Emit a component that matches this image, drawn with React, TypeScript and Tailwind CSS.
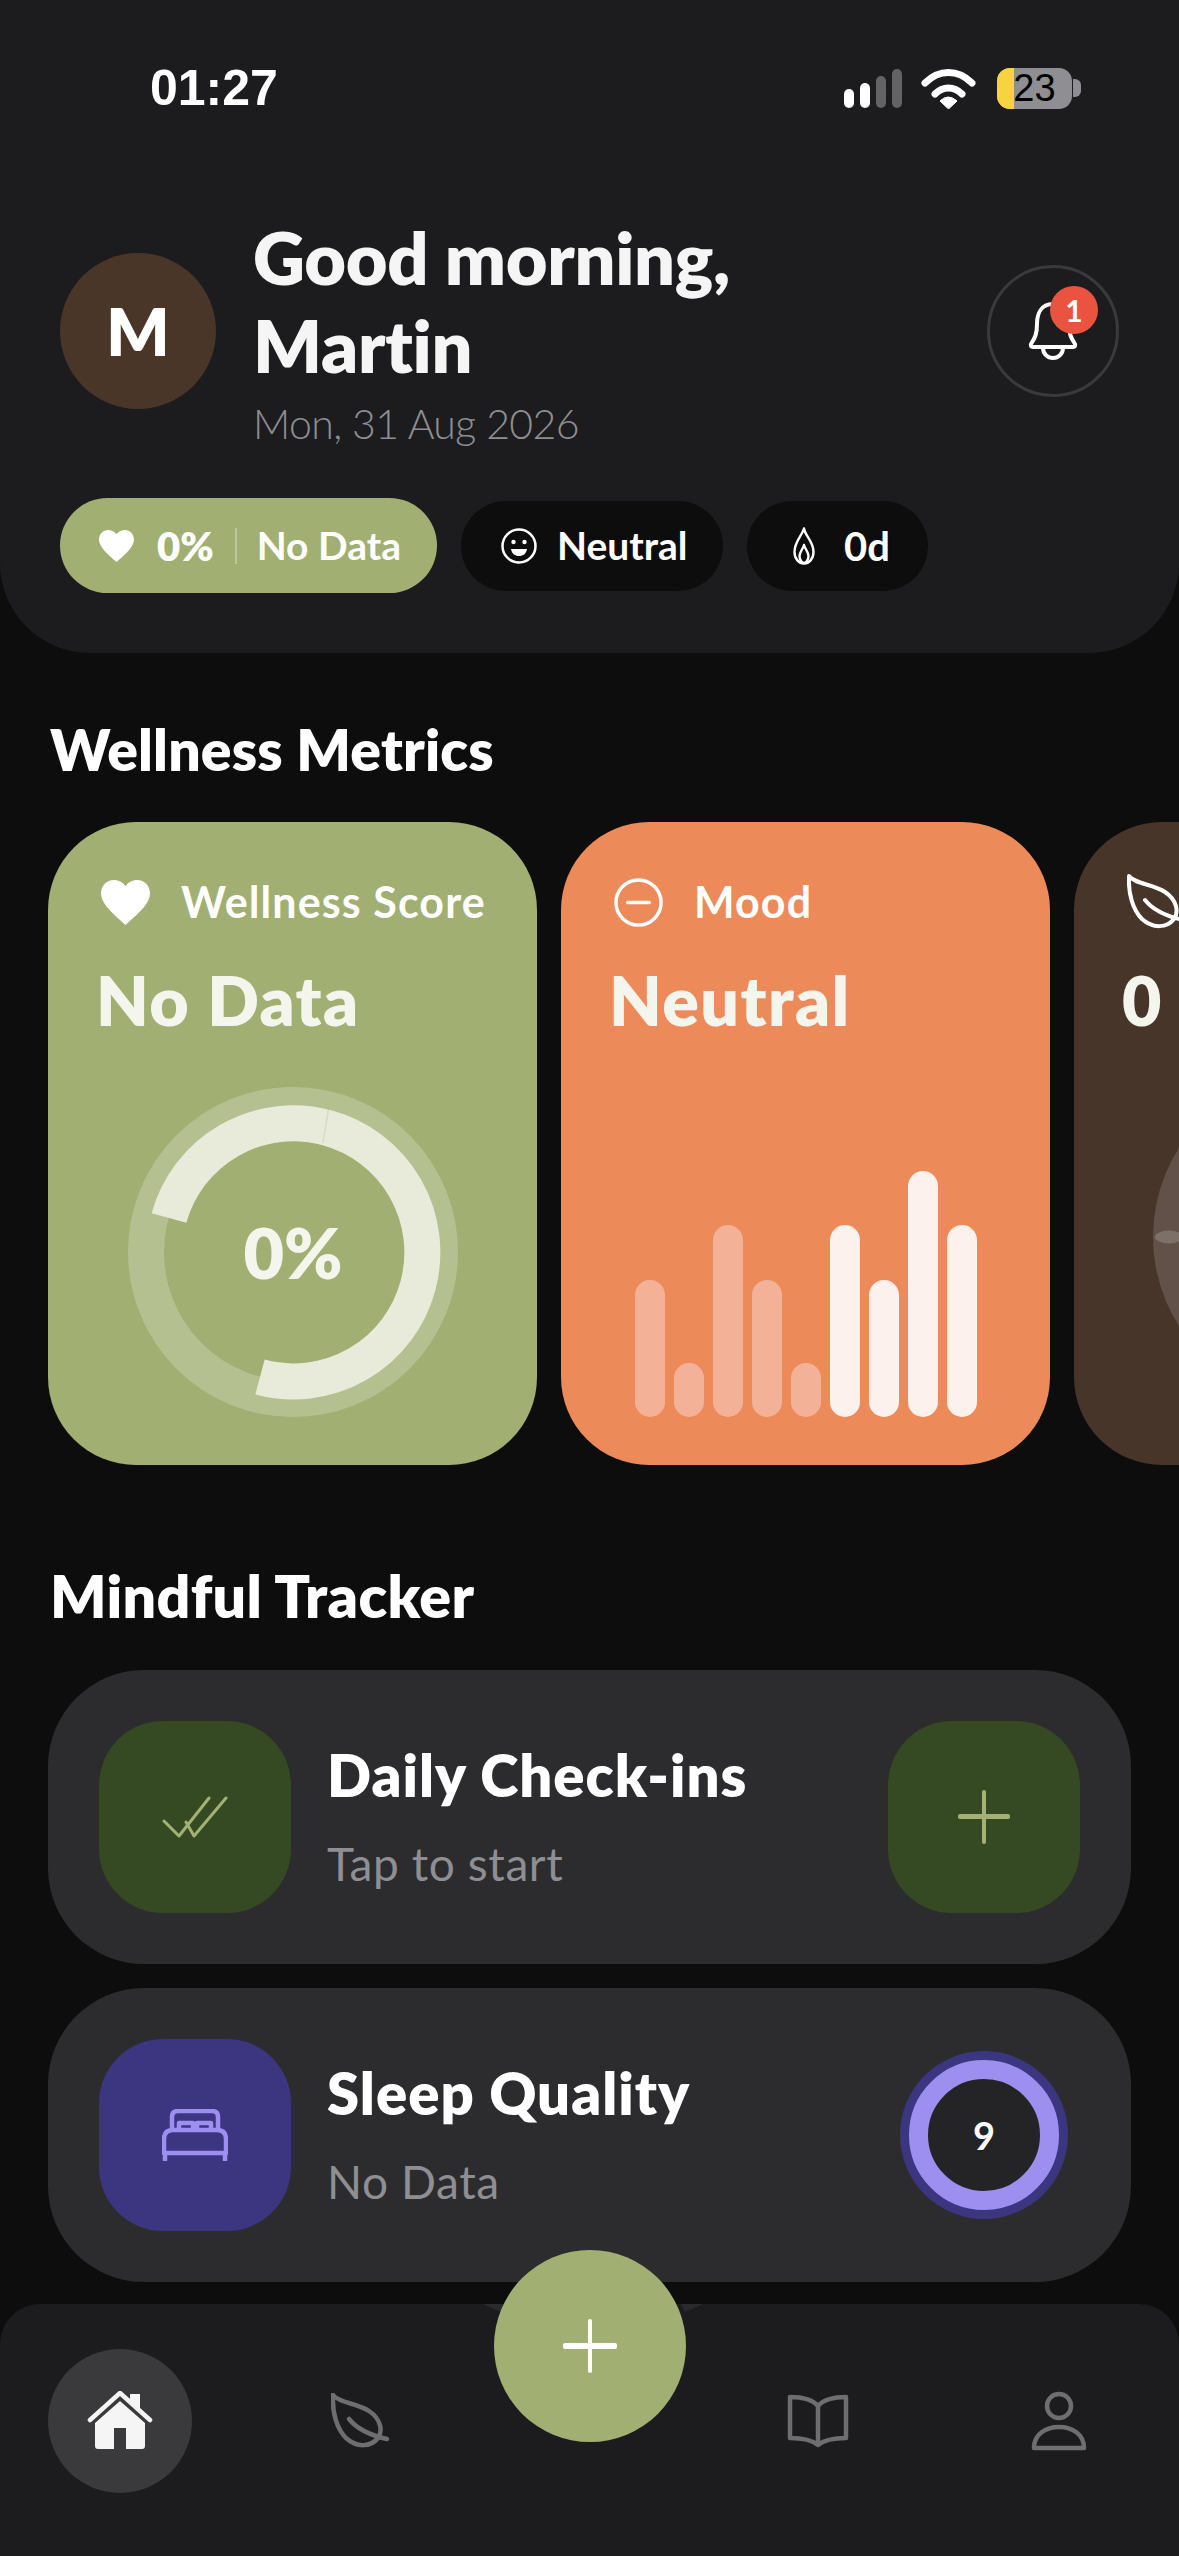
import React from "react";

const LeafPath = () => (
  <>
    <path d="M2 2C8 10 26 10 38 18C50 26 52 38 47 45C40 54 26 55 15 45C6 36 1 20 2 2Z" />
    <path d="M18 26C26 36 38 42 56 46" />
  </>
);

function Leaf({ stroke, width }: { stroke: string; width: number }) {
  return (
    <svg width="60" height="56" viewBox="0 0 60 56" fill="none" stroke={stroke} strokeWidth={width} strokeLinecap="round" strokeLinejoin="round" className="shrink-0">
      <LeafPath />
    </svg>
  );
}

function StatusBar() {
  return (
    <div className="flex items-center justify-between h-[50px] pl-[150px] pr-[98px]">
      <span className="font-['Liberation_Sans',sans-serif] font-bold text-[50px] leading-[50px] text-white">01:27</span>
      <div className="flex items-center">
        <svg width="58" height="39" viewBox="0 0 58 39" className="shrink-0">
          <rect x="0" y="20" width="10" height="19" rx="5" fill="#fff" />
          <rect x="16" y="14" width="10" height="25" rx="5" fill="#fff" />
          <rect x="32" y="7" width="10" height="32" rx="5" fill="#636366" />
          <rect x="48" y="0" width="10" height="39" rx="5" fill="#636366" />
        </svg>
        <svg width="55" height="41" viewBox="0 0 55 41" className="ml-[19px] shrink-0">
          <path d="M4 15C18 1 37 1 51 15" fill="none" stroke="#fff" strokeWidth="7" strokeLinecap="round" />
          <path d="M14 26C22 18 33 18 41 26" fill="none" stroke="#fff" strokeWidth="7" strokeLinecap="round" />
          <path d="M19 33Q27 25 36 33L27.500 41Z" fill="#fff" stroke="#fff" strokeWidth="1" strokeLinejoin="round" />
        </svg>
        <div className="relative ml-[21px] w-[75px] h-[41px] rounded-[13px] bg-[#8e8e93] overflow-hidden">
          <div className="absolute inset-y-0 left-0 w-[17px] bg-[#f7d33f]" />
          <span className="absolute inset-0 flex items-center justify-center font-['Liberation_Sans',sans-serif] text-[38px] leading-none text-black">23</span>
        </div>
        <div className="w-[8px] h-[18px] ml-[1px] rounded-r-[6px] bg-[#8e8e93]" />
      </div>
    </div>
  );
}

function Header() {
  return (
    <header className="h-[653px] bg-[#1c1c1e] rounded-b-[90px] pt-[63px] shrink-0">
      <StatusBar />
      <div className="flex items-center pl-[60px] pr-[60px] mt-[100px]">
        <div className="w-[156px] h-[156px] rounded-full bg-[#4a3628] flex items-center justify-center shrink-0 text-white font-extrabold text-[66px] leading-none">M</div>
        <div className="ml-[37px] flex-1">
          <h1 className="text-[72px] leading-[88px] font-extrabold tracking-[-0.3px] text-[#f5f5f5]">
            Good morning,
            <br />
            Martin
          </h1>
          <p className="mt-[10px] text-[41px] leading-[50px] font-light tracking-[-0.6px] text-[#8e8e93]">Mon, 31 Aug 2026</p>
        </div>
        <div className="relative w-[132px] h-[132px] rounded-full border-[3px] border-[#3a3a3c] flex items-center justify-center shrink-0">
          <svg width="52" height="62" viewBox="0 0 52 62" fill="none" stroke="#fff" strokeWidth="4" strokeLinejoin="round">
            <path d="M26 4C14 4 10 14 10 24C10 34 8 38 4 44Q3 47 6 47H46Q49 47 48 44C44 38 42 34 42 24C42 14 38 4 26 4Z" />
            <path d="M16 48A10 10 0 0 0 36 48" />
          </svg>
          <span className="absolute left-[60px] top-[18px] w-[48px] h-[48px] rounded-full bg-[#e9533f] flex items-center justify-center text-white font-bold text-[30px] leading-none">1</span>
        </div>
      </div>
      <div className="flex items-center pl-[60px] mt-[49px]">
        <div className="h-[95px] w-[377px] rounded-full bg-[#a1af72] flex items-center pl-[39px] text-white font-bold text-[40px] leading-none">
          <svg width="35" height="32" viewBox="0 0 24 22" fill="#fff" className="shrink-0">
            <path d="M12 22C4 15 0 11 0 6.500C0 2.800 2.800 0 6.300 0C8.500 0 10.700 1.100 12 3C13.300 1.100 15.500 0 17.700 0C21.200 0 24 2.800 24 6.500C24 11 20 15 12 22Z" />
          </svg>
          <span className="ml-[23px] font-extrabold">0%</span>
          <span className="w-[2px] h-[36px] bg-white/30 ml-[21px]" />
          <span className="ml-[20px] font-bold text-[39px]">No Data</span>
        </div>
        <div className="ml-[24px] h-[90px] w-[262px] rounded-full bg-[#0d0d0d] flex items-center pl-[40px] text-white font-bold text-[39px] leading-none">
          <svg width="36" height="36" viewBox="0 0 36 36" fill="none" className="shrink-0">
            <circle cx="18" cy="18" r="16.500" stroke="#fff" strokeWidth="2.500" />
            <circle cx="12.500" cy="14" r="2.200" fill="#fff" />
            <circle cx="23.500" cy="14" r="2.200" fill="#fff" />
            <path d="M10 21H26C25 26 22 28 18 28C14 28 11 26 10 21Z" fill="#fff" />
          </svg>
          <span className="ml-[20px]">Neutral</span>
        </div>
        <div className="ml-[24px] h-[90px] w-[181px] rounded-full bg-[#0d0d0d] flex items-center pl-[46px] text-white font-bold text-[40px] leading-none">
          <svg width="22" height="38" viewBox="0 0 22 38" fill="none" stroke="#fff" strokeWidth="2.400" strokeLinejoin="round" className="shrink-0">
            <path d="M11 1.500C12 9 20.500 14 20.500 25C20.500 32 16 36.500 11 36.500C6 36.500 1.500 32 1.500 25C1.500 14 9 9 11 1.500Z" />
            <path d="M11 18C12 22 15.500 25 15.500 29C15.500 33 13 36 11 36C9 36 6.500 33 6.500 29C6.500 25 10 22 11 18Z" />
          </svg>
          <span className="ml-[29px]">0d</span>
        </div>
      </div>
    </header>
  );
}

function CardHead({ icon, label, value }: { icon: React.ReactNode; label?: string; value: string }) {
  return (
    <>
      <div className="flex items-center h-[56px] pl-[3px] whitespace-nowrap">
        {icon}
        {label && <span className="ml-[31px] text-[43px] leading-[56px] font-bold tracking-[1.100px] text-white">{label}</span>}
      </div>
      <div className="mt-[32px] -ml-[2px] text-[68px] leading-[76px] font-extrabold tracking-[1.400px] text-[#f4f5ec] whitespace-nowrap">{value}</div>
    </>
  );
}

const cardShell = "w-[489px] h-[643px] shrink-0 rounded-[88px] pt-[52px] pb-[48px] px-[50px] flex flex-col";

function WellnessCard() {
  return (
    <div className={`${cardShell} bg-[#a1af72]`}>
      <CardHead
        label="Wellness Score"
        value="No Data"
        icon={
          <svg width="49" height="45" viewBox="0 0 24 22" fill="#fff" className="shrink-0">
            <path d="M12 22C4 15 0 11 0 6.500C0 2.800 2.800 0 6.300 0C8.500 0 10.700 1.100 12 3C13.300 1.100 15.500 0 17.700 0C21.200 0 24 2.800 24 6.500C24 11 20 15 12 22Z" />
          </svg>
        }
      />
      <div className="relative w-[330px] h-[330px] mt-auto ml-[30px]">
        <svg width="330" height="330" viewBox="-165 -165 330 330" fill="none">
          <circle r="147" stroke="#fff" strokeOpacity="0.22" strokeWidth="36" />
          <path d="M-33 125A129 129 0 1 0 -124 -34" stroke="#e8ebda" strokeWidth="36" />
          <path d="M36 -146L30 -109" stroke="#a1af72" strokeOpacity="0.25" strokeWidth="1.500" />
        </svg>
        <span className="absolute inset-0 flex items-center justify-center text-[70px] leading-none font-extrabold text-[#f4f5ec]">0%</span>
      </div>
    </div>
  );
}

const bars = [
  { h: "h-[137px]", on: false },
  { h: "h-[54px]", on: false },
  { h: "h-[192px]", on: false },
  { h: "h-[137px]", on: false },
  { h: "h-[54px]", on: false },
  { h: "h-[192px]", on: true },
  { h: "h-[137px]", on: true },
  { h: "h-[246px]", on: true },
  { h: "h-[192px]", on: true },
];

function MoodCard() {
  return (
    <div className={`${cardShell} bg-[#ed8a5a]`}>
      <CardHead
        label="Mood"
        value="Neutral"
        icon={
          <svg width="49" height="49" viewBox="0 0 50 50" fill="none" stroke="#fff" strokeWidth="3.500" strokeLinecap="round" className="shrink-0">
            <circle cx="25" cy="25" r="23" />
            <path d="M14 25H36" />
          </svg>
        }
      />
      <div className="flex items-end justify-center gap-[9px] mt-auto">
        {bars.map((b, i) => (
          <div key={i} className={`w-[30px] rounded-full ${b.h} ${b.on ? "bg-[#fcf1ec]" : "bg-[#f3b297]"}`} />
        ))}
      </div>
    </div>
  );
}

function MindfulCard() {
  return (
    <div className={`${cardShell} bg-[#47352a]`}>
      <CardHead value="0" icon={<Leaf stroke="#fff" width={4} />} />
      <svg width="330" height="330" viewBox="0 0 330 330" className="mt-auto ml-[29px] shrink-0 overflow-visible">
        <circle cx="165" cy="150" r="165" fill="#fff" fillOpacity="0.14" />
        <ellipse cx="16" cy="150" rx="14" ry="6.500" fill="#fff" fillOpacity="0.18" />
      </svg>
    </div>
  );
}

function TrackerRow({ tile, title, sub, right, icon }: { tile: string; title: string; sub: string; right: React.ReactNode; icon: React.ReactNode }) {
  return (
    <div className="h-[294px] rounded-[96px] bg-[#2c2c2e] flex items-center pl-[51px] pr-[51px]">
      <div className={`w-[192px] h-[192px] rounded-[64px] ${tile} flex items-center justify-center shrink-0`}>{icon}</div>
      <div className="ml-[36px] flex-1 pb-[3px]">
        <div className="text-[58px] leading-[68px] font-extrabold tracking-[1px] text-white">{title}</div>
        <div className="mt-[28px] text-[46px] leading-[54px] font-normal tracking-[0.6px] text-[#8e8e93]">{sub}</div>
      </div>
      {right}
    </div>
  );
}

function BottomNav() {
  return (
    <nav className="absolute left-0 right-0 bottom-0 h-[252px] bg-[#1c1c1e] rounded-t-[40px]">
      <svg width="220" height="10" viewBox="0 0 220 10" className="absolute left-[483px] top-0">
        <path d="M0 0H22L18 8Z" fill="#2a2a2c" />
        <path d="M198 0H220L202 8Z" fill="#2a2a2c" />
      </svg>
      <div className="flex items-start pl-[48px] pt-[45px]">
        <div className="w-[144px] h-[144px] rounded-full bg-[#3a3a3c] flex items-center justify-center">
          <svg width="66" height="60" viewBox="0 0 66 60" fill="#f5f5f5">
            <path d="M3 29L33 2L63 29" fill="none" stroke="#f5f5f5" strokeWidth="4.500" strokeLinecap="round" strokeLinejoin="round" />
            <path d="M43 3H53V18L43 9Z" />
            <path d="M33 10L58 32V55Q58 58 55 58H39V37H27V58H11Q8 58 8 55V32Z" />
          </svg>
        </div>
        <div className="w-[144px] h-[144px] ml-[97px] flex items-center justify-center">
          <Leaf stroke="#6e6e70" width={4.500} />
        </div>
        <div className="w-[144px] h-[144px] ml-[313px] flex items-center justify-center">
          <svg width="62" height="54" viewBox="0 0 62 54" fill="none" stroke="#6e6e70" strokeWidth="4.500" strokeLinejoin="round">
            <path d="M31 12C25 5 14 3 3 3V44C14 44 25 46 31 51C37 46 48 44 59 44V3C48 3 37 5 31 12Z" />
            <path d="M31 12V51" />
          </svg>
        </div>
        <div className="w-[144px] h-[144px] ml-[97px] flex items-center justify-center">
          <svg width="56" height="62" viewBox="0 0 56 62" fill="none" stroke="#6e6e70" strokeWidth="4.500" strokeLinejoin="round">
            <circle cx="28" cy="16" r="12" />
            <path d="M3 58C3 44 15 37 28 37C41 37 53 44 53 58Z" />
          </svg>
        </div>
      </div>
      <div className="absolute left-[494px] -top-[54px] w-[192px] h-[192px] rounded-full bg-[#a1af72] flex items-center justify-center">
        <svg width="54" height="54" viewBox="0 0 54 54" fill="#fff">
          <rect x="25" y="0" width="4" height="54" rx="2" />
          <rect x="0" y="24" width="54" height="6" rx="2" />
        </svg>
      </div>
    </nav>
  );
}

export default function App() {
  return (
    <div className="relative w-[1179px] h-[2556px] overflow-hidden bg-[#0d0d0d] font-['Lato',sans-serif] flex flex-col">
      <Header />
      <main className="flex-1 flex flex-col">
        <h2 className="mt-[60px] ml-[50px] text-[57px] leading-[72px] font-extrabold tracking-[0.2px] text-white">Wellness Metrics</h2>
        <div className="mt-[37px] flex gap-[24px] pl-[48px] overflow-hidden">
          <WellnessCard />
          <MoodCard />
          <MindfulCard />
        </div>
        <h2 className="mt-[95px] ml-[50px] text-[59px] leading-[72px] font-extrabold tracking-[0.3px] text-white">Mindful Tracker</h2>
        <div className="mt-[38px] mx-[48px] flex flex-col gap-[24px]">
          <TrackerRow
            tile="bg-[#354a22]"
            title="Daily Check-ins"
            sub="Tap to start"
            icon={
              <svg width="66" height="42" viewBox="0 0 66 42" fill="none" stroke="#a3b174" strokeWidth="3" strokeLinecap="round" strokeLinejoin="round">
                <path d="M2 25L17 40L47 2" />
                <path d="M24 26L32 40L64 2" />
              </svg>
            }
            right={
              <div className="w-[192px] h-[192px] rounded-[64px] bg-[#354a22] flex items-center justify-center shrink-0">
                <svg width="52" height="54" viewBox="0 0 52 54" fill="#a3b174">
                  <rect x="24" y="0" width="4" height="54" rx="2" />
                  <rect x="0" y="24" width="52" height="5" rx="2" />
                </svg>
              </div>
            }
          />
          <TrackerRow
            tile="bg-[#3c3580]"
            title="Sleep Quality"
            sub="No Data"
            icon={
              <svg width="66" height="52" viewBox="0 0 66 52" fill="none" stroke="#9d8ff0" strokeWidth="4.500" strokeLinejoin="round">
                <path d="M10 21V8Q10 2 16 2H50Q56 2 56 8V21" />
                <path d="M17 21V14H31V21M35 21V14H49V21" />
                <path d="M2 44V30Q2 21 11 21H55Q64 21 64 30V44Z" />
                <path d="M3 44V51M63 44V51" strokeLinecap="round" />
              </svg>
            }
            right={
              <div className="w-[168px] h-[168px] mr-[12px] rounded-full bg-[#3c3580] flex items-center justify-center shrink-0">
                <div className="w-[150px] h-[150px] rounded-full border-[19px] border-[#9d8ff0] bg-[#242426] flex items-center justify-center text-white font-bold text-[38px] leading-none">9</div>
              </div>
            }
          />
        </div>
      </main>
      <BottomNav />
    </div>
  );
}
